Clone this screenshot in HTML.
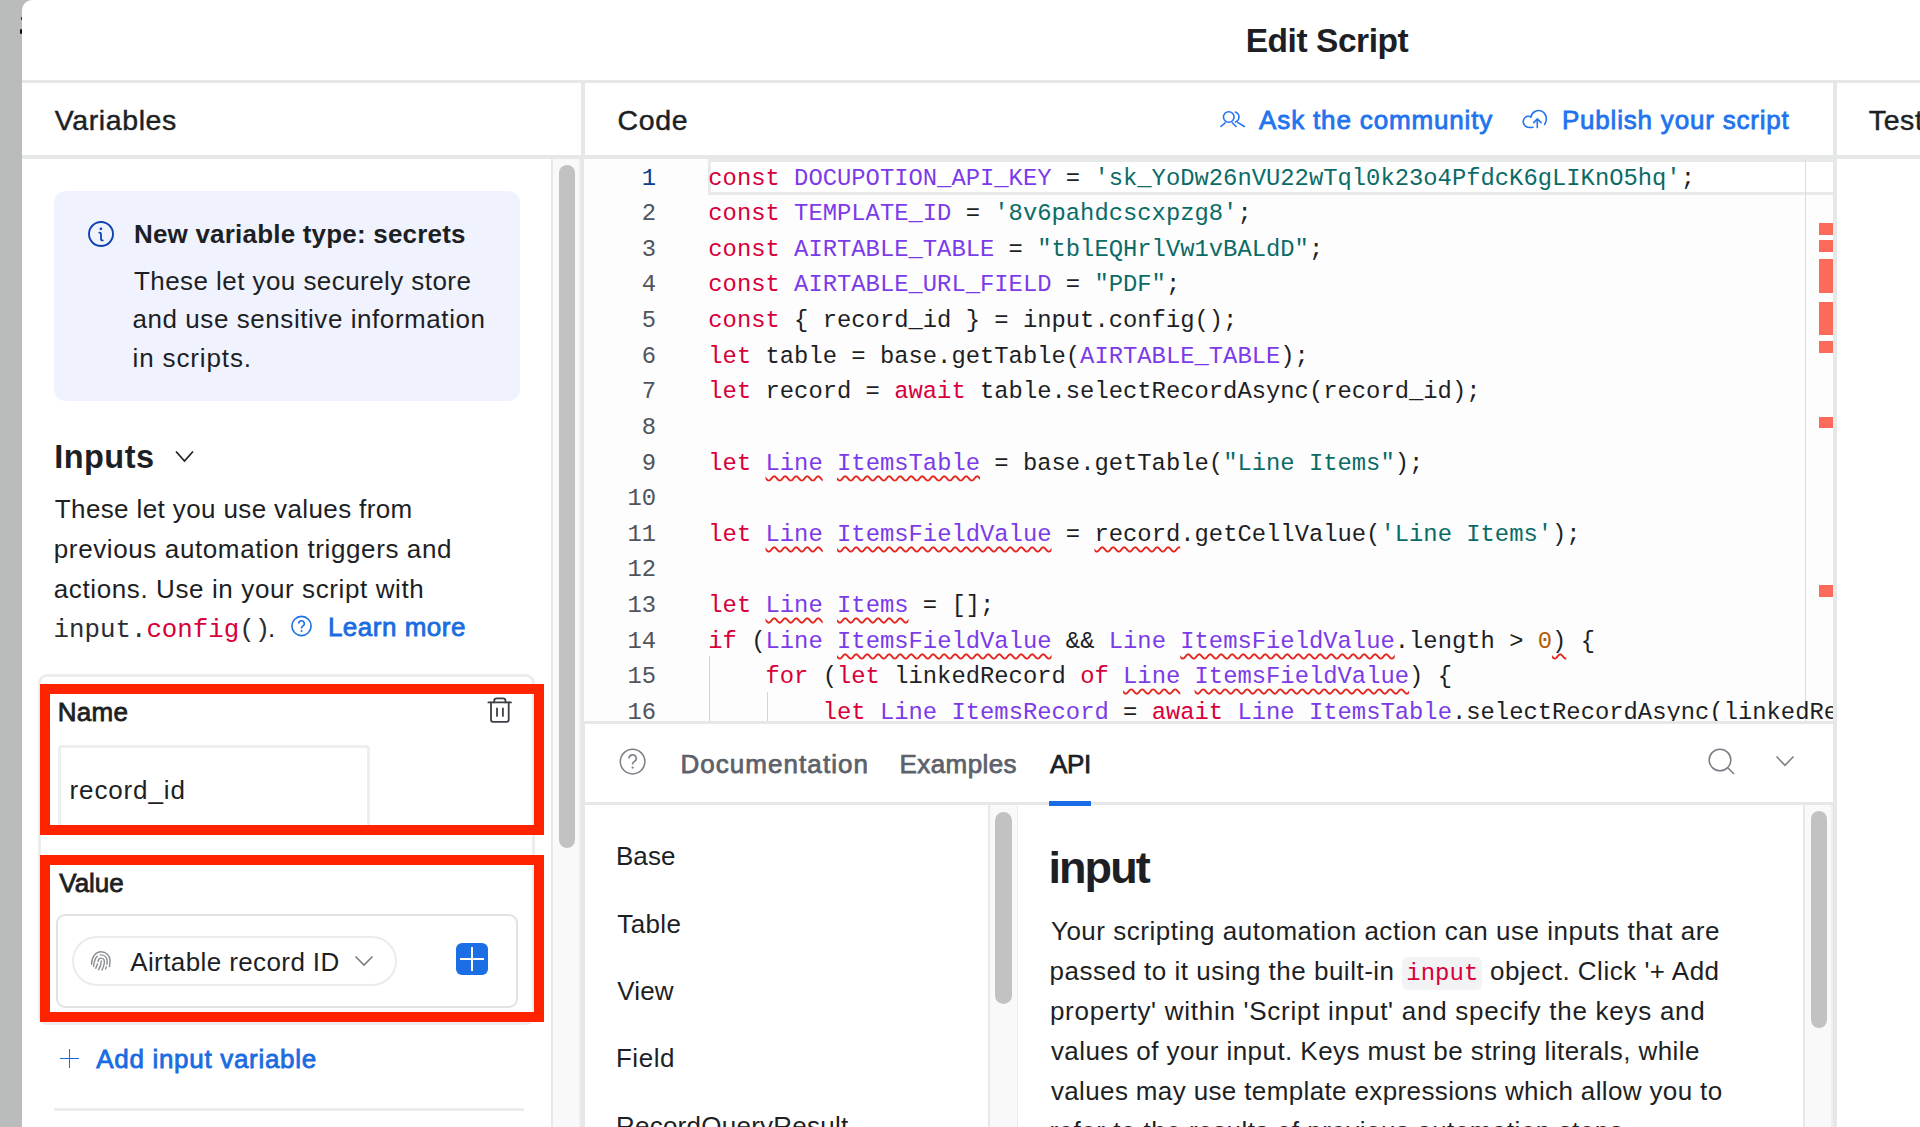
<!DOCTYPE html>
<html><head><meta charset="utf-8">
<style>
*{box-sizing:border-box;margin:0;padding:0}
html,body{width:1920px;height:1127px;overflow:hidden;background:#babbbb;font-family:"Liberation Sans",sans-serif;color:#1d1f25}
.a{position:absolute;white-space:nowrap}
.sq{text-decoration:underline wavy #e5261f;text-decoration-thickness:1.6px;text-underline-offset:5px;text-decoration-skip-ink:none}
</style></head><body>
<div class="a" style="left:21.6px;top:0px;width:1899px;height:1127px;background:#fff;border-top-left-radius:10px"></div>
<div class="a" style="left:19.5px;top:28.5px;width:2.2px;height:5.5px;background:#111;border-radius:1px"></div>
<div class="a" style="left:20.6px;top:17px;width:1.1px;height:3px;background:#333"></div>
<div class="a" style="left:1245.70px;top:24.34px;font-size:33.5px;line-height:33.5px;font-weight:bold;color:#1d1f25;letter-spacing:-0.446px;font-family:'Liberation Sans',sans-serif;">Edit Script</div>
<div class="a" style="left:22px;top:79.6px;width:1898px;height:3.4px;background:#e6e7e7"></div>
<div class="a" style="left:22px;top:155px;width:1898px;height:3.7px;background:#e6e7e7"></div>
<div class="a" style="left:581.2px;top:83px;width:3.7px;height:1044px;background:#e6e7e7"></div>
<div class="a" style="left:1833px;top:83px;width:3.5px;height:1044px;background:#e6e7e7"></div>
<div class="a" style="left:54.83px;top:106.37px;font-size:28.5px;line-height:28.5px;font-weight:normal;color:#1d1f25;letter-spacing:0.594px;font-family:'Liberation Sans',sans-serif;-webkit-text-stroke:0.45px #1d1f25;">Variables</div>
<div class="a" style="left:617.52px;top:106.37px;font-size:28.5px;line-height:28.5px;font-weight:normal;color:#1d1f25;letter-spacing:0.689px;font-family:'Liberation Sans',sans-serif;-webkit-text-stroke:0.45px #1d1f25;">Code</div>
<div class="a" style="left:1868.8px;top:106.17px;font-size:28.5px;line-height:28.5px;font-weight:normal;color:#1d1f25;letter-spacing:0.6px;font-family:'Liberation Sans',sans-serif;-webkit-text-stroke:0.45px #1d1f25;">Test</div>
<div class="a" style="left:551.4px;top:158.8px;width:29.8px;height:969px;background:#f9f9f9;border-left:2px solid #e8e8e8;border-right:2px solid #eeeeee"></div>
<div class="a" style="left:559px;top:165px;width:16px;height:683px;background:#c2c2c2;border-radius:8px"></div>
<div class="a" style="left:54px;top:191px;width:466px;height:210px;background:#f0f3fd;border-radius:12px"></div>
<svg class="a" style="left:87px;top:220px" width="28" height="28" viewBox="0 0 28 28"><circle cx="14" cy="14" r="12" fill="none" stroke="#0f44b0" stroke-width="1.9"/><circle cx="13.9" cy="8.8" r="1.35" fill="#0f44b0"/><path d="M12.4 12.7Q14 12.7 14 14.2V19Q14 20.4 15.7 20.4" fill="none" stroke="#0f44b0" stroke-width="1.8" stroke-linecap="round"/></svg>
<div class="a" style="left:134.00px;top:221.09px;font-size:26px;line-height:26px;font-weight:bold;color:#1d1f25;letter-spacing:0.194px;font-family:'Liberation Sans',sans-serif;">New variable type: secrets</div>
<div class="a" style="left:134.00px;top:267.59px;font-size:26px;line-height:26px;font-weight:normal;color:#1d1f25;letter-spacing:0.434px;font-family:'Liberation Sans',sans-serif;">These let you securely store</div>
<div class="a" style="left:132.50px;top:306.39px;font-size:26px;line-height:26px;font-weight:normal;color:#1d1f25;letter-spacing:0.561px;font-family:'Liberation Sans',sans-serif;">and use sensitive information</div>
<div class="a" style="left:132.50px;top:345.19px;font-size:26px;line-height:26px;font-weight:normal;color:#1d1f25;letter-spacing:0.867px;font-family:'Liberation Sans',sans-serif;">in scripts.</div>
<div class="a" style="left:54.25px;top:441.39px;font-size:32.5px;line-height:32.5px;font-weight:bold;color:#1d1f25;letter-spacing:0.448px;font-family:'Liberation Sans',sans-serif;">Inputs</div>
<svg class="a" style="left:174px;top:449px" width="21" height="15" viewBox="0 0 21 15"><path d="M2 2.5L10.5 12L19 2.5" fill="none" stroke="#1d1f25" stroke-width="1.7"/></svg>
<div class="a" style="left:54.80px;top:495.99px;font-size:26px;line-height:26px;font-weight:normal;color:#1d1f25;letter-spacing:0.379px;font-family:'Liberation Sans',sans-serif;">These let you use values from</div>
<div class="a" style="left:53.80px;top:535.79px;font-size:26px;line-height:26px;font-weight:normal;color:#1d1f25;letter-spacing:0.613px;font-family:'Liberation Sans',sans-serif;">previous automation triggers and</div>
<div class="a" style="left:53.80px;top:575.59px;font-size:26px;line-height:26px;font-weight:normal;color:#1d1f25;letter-spacing:0.608px;font-family:'Liberation Sans',sans-serif;">actions. Use in your script with</div>
<div class="a" style="left:53.5px;top:617.52px;font-size:25.8px;line-height:25.8px;font-weight:normal;color:#2a2d33;letter-spacing:0px;font-family:'Liberation Mono',monospace;">input.<span style="color:#d7003a">config</span>()</div>
<div class="a" style="left:268px;top:615.29px;font-size:26px;line-height:26px;font-weight:normal;color:#1d1f25;letter-spacing:0px;font-family:'Liberation Sans',sans-serif;">.</div>
<svg class="a" style="left:290px;top:614px" width="24" height="24" viewBox="0 0 24 24"><circle cx="11.5" cy="12" r="9.6" fill="none" stroke="#1f6fe5" stroke-width="1.6"/><path d="M8.7 9.6a2.8 2.8 0 1 1 4.2 2.4c-.9.5-1.4 1-1.4 2v.6" fill="none" stroke="#1f6fe5" stroke-width="1.6"/><circle cx="11.5" cy="16.9" r="1" fill="#1f6fe5"/></svg>
<div class="a" style="left:327.90px;top:613.99px;font-size:26px;line-height:26px;font-weight:normal;color:#1a6ce0;letter-spacing:0.511px;font-family:'Liberation Sans',sans-serif;-webkit-text-stroke:0.8px #1a6ce0;">Learn more</div>
<div class="a" style="left:38px;top:674px;width:497px;height:351px;border:3px solid #ededed;border-radius:9px"></div>
<div class="a" style="left:58px;top:745px;width:312px;height:90px;border:3px solid #eeeeee;border-radius:4px;border-bottom:none"></div>
<div class="a" style="left:57.70px;top:699.49px;font-size:26px;line-height:26px;font-weight:normal;color:#1d1f25;letter-spacing:0.268px;font-family:'Liberation Sans',sans-serif;-webkit-text-stroke:0.8px #1d1f25;">Name</div>
<svg class="a" style="left:486px;top:696px" width="28" height="28" viewBox="0 0 28 28" fill="none" stroke="#3c3f46" stroke-width="1.8" stroke-linecap="round"><path d="M2.4 6.4H25"/><path d="M8.2 6.4V4.8a2.5 2.5 0 0 1 2.5-2.5h6.3a2.5 2.5 0 0 1 2.5 2.5V6.4"/><path d="M5 6.4V23.8a2 2 0 0 0 2 2h13.7a2 2 0 0 0 2-2V6.4"/><path d="M11 12.4V19.9M16.9 12.4V19.9"/></svg>
<div class="a" style="left:69.60px;top:776.69px;font-size:26px;line-height:26px;font-weight:normal;color:#1d1f25;letter-spacing:0.858px;font-family:'Liberation Sans',sans-serif;">record_id</div>
<div class="a" style="left:59.30px;top:869.89px;font-size:26px;line-height:26px;font-weight:normal;color:#1d1f25;letter-spacing:-0.027px;font-family:'Liberation Sans',sans-serif;-webkit-text-stroke:0.8px #1d1f25;">Value</div>
<div class="a" style="left:56px;top:914px;width:462px;height:94px;border:2px solid #e2e2e2;border-radius:9px"></div>
<div class="a" style="left:72px;top:936px;width:325px;height:50px;border:2px solid #ebebeb;border-radius:25px"></div>
<svg class="a" style="left:85px;top:945px" width="32" height="32" viewBox="0 0 32 32" fill="none" stroke="#8b8e93" stroke-width="1.4" stroke-linecap="round"><path d="M6.5 19.3C6.6 11.5 11 6.8 15.9 6.8C21 6.8 25 10.5 25 15.3C25 18 24.7 20 24.4 21.6"/><path d="M12.2 11.4C9.5 13.5 9.3 17 8.5 21.3"/><path d="M15.3 9.9C19 10 22 12 22.1 15.3C22.2 17 22 18 21.9 19.3"/><path d="M13.1 16.5C13.2 14.3 14.5 13.1 16 13.1C18.5 13.1 19.6 15 19.4 17.5C19.2 20.5 18 23 17 25"/><path d="M16.2 15.9C16.3 19.5 15 22.5 13.6 24.7"/><path d="M12.5 18.8L10.8 23.3"/><path d="M21.3 21.9L20.5 23.9"/></svg>
<div class="a" style="left:130.20px;top:949.49px;font-size:26px;line-height:26px;font-weight:normal;color:#1d1f25;letter-spacing:0.399px;font-family:'Liberation Sans',sans-serif;">Airtable record ID</div>
<svg class="a" style="left:353px;top:954px" width="22" height="14" viewBox="0 0 22 14"><path d="M2.5 2.5L11 11L19.5 2.5" fill="none" stroke="#7a7d83" stroke-width="1.6"/></svg>
<div class="a" style="left:456px;top:943px;width:32px;height:32px;background:#1b6ee3;border-radius:6px"></div>
<div class="a" style="left:460px;top:958px;width:24px;height:2px;background:#fff"></div>
<div class="a" style="left:471px;top:947px;width:2px;height:24px;background:#fff"></div>
<div class="a" style="left:40px;top:684px;width:504px;height:151px;border:10px solid #ff2300"></div>
<div class="a" style="left:40px;top:855px;width:504px;height:167px;border:10px solid #ff2300"></div>
<div class="a" style="left:60px;top:1057.5px;width:19px;height:1.6px;background:#1a6ce0"></div>
<div class="a" style="left:68.7px;top:1049px;width:1.6px;height:19px;background:#1a6ce0"></div>
<div class="a" style="left:96.20px;top:1045.99px;font-size:26px;line-height:26px;font-weight:normal;color:#1a6ce0;letter-spacing:0.695px;font-family:'Liberation Sans',sans-serif;-webkit-text-stroke:0.8px #1a6ce0;">Add input variable</div>
<div class="a" style="left:54px;top:1108px;width:470px;height:3px;background:#ededed"></div>
<svg class="a" style="left:1218px;top:106px" width="30" height="24" viewBox="0 0 30 24" fill="none" stroke="#2574f0" stroke-width="1.6" stroke-linecap="round"><circle cx="10.75" cy="11" r="5.3"/><path d="M17.4 6A5.3 5.3 0 0 1 17.4 16"/><path d="M2.9 20.5L7.2 16.8M14.3 16.8L18 20.5M19.6 16.4L26.4 20.5"/></svg>
<div class="a" style="left:1259.10px;top:107.09px;font-size:26px;line-height:26px;font-weight:normal;color:#2273ee;letter-spacing:0.848px;font-family:'Liberation Sans',sans-serif;-webkit-text-stroke:0.8px #2273ee;">Ask the community</div>
<svg class="a" style="left:1520px;top:107px" width="30" height="24" viewBox="0 0 30 24" fill="none" stroke="#2574f0" stroke-width="1.6" stroke-linecap="round"><path d="M12.9 20.3C6 21.5 2.2 17.5 3.5 13C4.6 9.5 8 8.5 10.8 9.8"/><path d="M10.8 10.2C12 4.5 18 2 22.5 4.6C27 7.2 27.5 13.5 24.6 17.4"/><path d="M17.3 20.6V11.9M13.7 15.6L17.3 11.9L21.1 15.6"/></svg>
<div class="a" style="left:1561.90px;top:107.09px;font-size:26px;line-height:26px;font-weight:normal;color:#2273ee;letter-spacing:0.806px;font-family:'Liberation Sans',sans-serif;-webkit-text-stroke:0.8px #2273ee;">Publish your script</div>
<div class="a" style="left:584px;top:158.7px;width:1249px;height:562.3px;background:#fdfdfd;overflow:hidden"></div>
<div class="a" style="left:708px;top:159px;width:1125px;height:36px;border:3.8px solid #e8e9e9;border-right:none;background:#fff"></div>
<div class="a" style="left:1805px;top:158.7px;width:1px;height:562.3px;background:#dcdcdc"></div>
<div class="a" style="left:1819px;top:223px;width:14px;height:12px;background:#fb6a5b"></div>
<div class="a" style="left:1819px;top:240px;width:14px;height:12px;background:#fb6a5b"></div>
<div class="a" style="left:1819px;top:259px;width:14px;height:34px;background:#fb6a5b"></div>
<div class="a" style="left:1819px;top:302px;width:14px;height:33px;background:#fb6a5b"></div>
<div class="a" style="left:1819px;top:341px;width:14px;height:12px;background:#fb6a5b"></div>
<div class="a" style="left:1819px;top:417px;width:14px;height:11px;background:#fb6a5b"></div>
<div class="a" style="left:1819px;top:585px;width:14px;height:12px;background:#fb6a5b"></div>
<div class="a" style="left:584px;top:158.7px;width:1249px;height:562.3px;overflow:hidden"><div class="a" style="left:0;width:72px;text-align:right;top:7.83px;font:23.83px/23.83px 'Liberation Mono',monospace;color:#0d3b8e">1</div><div class="a" style="left:124.3px;top:7.83px;font:23.83px/23.83px 'Liberation Mono',monospace;color:#1d1f25;white-space:pre"><span style="color:#d7003a">const</span> <span class="" style="color:#7c3be8">DOCUPOTION_API_KEY</span> = <span style="color:#0b6b66">&#x27;sk_YoDw26nVU22wTql0k23o4PfdcK6gLIKnO5hq&#x27;</span>;</div><div class="a" style="left:0;width:72px;text-align:right;top:43.46px;font:23.83px/23.83px 'Liberation Mono',monospace;color:#50545c">2</div><div class="a" style="left:124.3px;top:43.46px;font:23.83px/23.83px 'Liberation Mono',monospace;color:#1d1f25;white-space:pre"><span style="color:#d7003a">const</span> <span class="" style="color:#7c3be8">TEMPLATE_ID</span> = <span style="color:#0b6b66">&#x27;8v6pahdcscxpzg8&#x27;</span>;</div><div class="a" style="left:0;width:72px;text-align:right;top:79.09px;font:23.83px/23.83px 'Liberation Mono',monospace;color:#50545c">3</div><div class="a" style="left:124.3px;top:79.09px;font:23.83px/23.83px 'Liberation Mono',monospace;color:#1d1f25;white-space:pre"><span style="color:#d7003a">const</span> <span class="" style="color:#7c3be8">AIRTABLE_TABLE</span> = <span style="color:#0b6b66">&quot;tblEQHrlVw1vBALdD&quot;</span>;</div><div class="a" style="left:0;width:72px;text-align:right;top:114.72px;font:23.83px/23.83px 'Liberation Mono',monospace;color:#50545c">4</div><div class="a" style="left:124.3px;top:114.72px;font:23.83px/23.83px 'Liberation Mono',monospace;color:#1d1f25;white-space:pre"><span style="color:#d7003a">const</span> <span class="" style="color:#7c3be8">AIRTABLE_URL_FIELD</span> = <span style="color:#0b6b66">&quot;PDF&quot;</span>;</div><div class="a" style="left:0;width:72px;text-align:right;top:150.35px;font:23.83px/23.83px 'Liberation Mono',monospace;color:#50545c">5</div><div class="a" style="left:124.3px;top:150.35px;font:23.83px/23.83px 'Liberation Mono',monospace;color:#1d1f25;white-space:pre"><span style="color:#d7003a">const</span> { record_id } = input.config();</div><div class="a" style="left:0;width:72px;text-align:right;top:185.98px;font:23.83px/23.83px 'Liberation Mono',monospace;color:#50545c">6</div><div class="a" style="left:124.3px;top:185.98px;font:23.83px/23.83px 'Liberation Mono',monospace;color:#1d1f25;white-space:pre"><span style="color:#d7003a">let</span> table = base.getTable(<span class="" style="color:#7c3be8">AIRTABLE_TABLE</span>);</div><div class="a" style="left:0;width:72px;text-align:right;top:221.61px;font:23.83px/23.83px 'Liberation Mono',monospace;color:#50545c">7</div><div class="a" style="left:124.3px;top:221.61px;font:23.83px/23.83px 'Liberation Mono',monospace;color:#1d1f25;white-space:pre"><span style="color:#d7003a">let</span> record = <span style="color:#d7003a">await</span> table.selectRecordAsync(record_id);</div><div class="a" style="left:0;width:72px;text-align:right;top:257.24px;font:23.83px/23.83px 'Liberation Mono',monospace;color:#50545c">8</div><div class="a" style="left:124.3px;top:257.24px;font:23.83px/23.83px 'Liberation Mono',monospace;color:#1d1f25;white-space:pre"></div><div class="a" style="left:0;width:72px;text-align:right;top:292.87px;font:23.83px/23.83px 'Liberation Mono',monospace;color:#50545c">9</div><div class="a" style="left:124.3px;top:292.87px;font:23.83px/23.83px 'Liberation Mono',monospace;color:#1d1f25;white-space:pre"><span style="color:#d7003a">let</span> <span class="sq" style="color:#7c3be8">Line</span> <span class="sq" style="color:#7c3be8">ItemsTable</span> = base.getTable(<span style="color:#0b6b66">&quot;Line Items&quot;</span>);</div><div class="a" style="left:0;width:72px;text-align:right;top:328.50px;font:23.83px/23.83px 'Liberation Mono',monospace;color:#50545c">10</div><div class="a" style="left:124.3px;top:328.50px;font:23.83px/23.83px 'Liberation Mono',monospace;color:#1d1f25;white-space:pre"></div><div class="a" style="left:0;width:72px;text-align:right;top:364.13px;font:23.83px/23.83px 'Liberation Mono',monospace;color:#50545c">11</div><div class="a" style="left:124.3px;top:364.13px;font:23.83px/23.83px 'Liberation Mono',monospace;color:#1d1f25;white-space:pre"><span style="color:#d7003a">let</span> <span class="sq" style="color:#7c3be8">Line</span> <span class="sq" style="color:#7c3be8">ItemsFieldValue</span> = <span class="sq">record</span>.getCellValue(<span style="color:#0b6b66">&#x27;Line Items&#x27;</span>);</div><div class="a" style="left:0;width:72px;text-align:right;top:399.76px;font:23.83px/23.83px 'Liberation Mono',monospace;color:#50545c">12</div><div class="a" style="left:124.3px;top:399.76px;font:23.83px/23.83px 'Liberation Mono',monospace;color:#1d1f25;white-space:pre"></div><div class="a" style="left:0;width:72px;text-align:right;top:435.39px;font:23.83px/23.83px 'Liberation Mono',monospace;color:#50545c">13</div><div class="a" style="left:124.3px;top:435.39px;font:23.83px/23.83px 'Liberation Mono',monospace;color:#1d1f25;white-space:pre"><span style="color:#d7003a">let</span> <span class="sq" style="color:#7c3be8">Line</span> <span class="sq" style="color:#7c3be8">Items</span> = [];</div><div class="a" style="left:0;width:72px;text-align:right;top:471.02px;font:23.83px/23.83px 'Liberation Mono',monospace;color:#50545c">14</div><div class="a" style="left:124.3px;top:471.02px;font:23.83px/23.83px 'Liberation Mono',monospace;color:#1d1f25;white-space:pre"><span style="color:#d7003a">if</span> (<span class="" style="color:#7c3be8">Line</span> <span class="sq" style="color:#7c3be8">ItemsFieldValue</span> &amp;&amp; <span class="" style="color:#7c3be8">Line</span> <span class="sq" style="color:#7c3be8">ItemsFieldValue</span>.length &gt; <span style="color:#b65c00">0</span><span class="sq">)</span> {</div><div class="a" style="left:0;width:72px;text-align:right;top:506.65px;font:23.83px/23.83px 'Liberation Mono',monospace;color:#50545c">15</div><div class="a" style="left:124.3px;top:506.65px;font:23.83px/23.83px 'Liberation Mono',monospace;color:#1d1f25;white-space:pre">    <span style="color:#d7003a">for</span> (<span style="color:#d7003a">let</span> linkedRecord <span style="color:#d7003a">of</span> <span class="sq" style="color:#7c3be8">Line</span> <span class="sq" style="color:#7c3be8">ItemsFieldValue</span>) {</div><div class="a" style="left:0;width:72px;text-align:right;top:542.28px;font:23.83px/23.83px 'Liberation Mono',monospace;color:#50545c">16</div><div class="a" style="left:124.3px;top:542.28px;font:23.83px/23.83px 'Liberation Mono',monospace;color:#1d1f25;white-space:pre">        <span style="color:#d7003a">let</span> <span class="" style="color:#7c3be8">Line</span> <span class="" style="color:#7c3be8">ItemsRecord</span> = <span style="color:#d7003a">await</span> <span class="" style="color:#7c3be8">Line</span> <span class="" style="color:#7c3be8">ItemsTable</span>.selectRecordAsync(linkedRecord);</div><div class="a" style="left:124.5px;top:497.3px;width:1px;height:80px;background:#d4d4d4"></div><div class="a" style="left:182.5px;top:532.9px;width:1px;height:60px;background:#d4d4d4"></div></div>
<div class="a" style="left:584px;top:721px;width:1249px;height:3.3px;background:#e6e7e7"></div>
<svg class="a" style="left:618px;top:747px" width="29" height="29" viewBox="0 0 29 29"><circle cx="14.6" cy="14.6" r="12.3" fill="none" stroke="#7c7f85" stroke-width="1.5"/><path d="M11 11.4a3.6 3.6 0 1 1 5.4 3.1c-1.1.6-1.8 1.2-1.8 2.4v.6" fill="none" stroke="#7c7f85" stroke-width="1.6"/><circle cx="14.6" cy="20.6" r="1.1" fill="#7c7f85"/></svg>
<div class="a" style="left:680.38px;top:750.79px;font-size:26px;line-height:26px;font-weight:normal;color:#5d616b;letter-spacing:1.061px;font-family:'Liberation Sans',sans-serif;-webkit-text-stroke:0.75px #5d616b;">Documentation</div>
<div class="a" style="left:899.62px;top:751.09px;font-size:26px;line-height:26px;font-weight:normal;color:#5d616b;letter-spacing:0.392px;font-family:'Liberation Sans',sans-serif;-webkit-text-stroke:0.75px #5d616b;">Examples</div>
<div class="a" style="left:1050.12px;top:751.09px;font-size:26px;line-height:26px;font-weight:normal;color:#1d1f25;letter-spacing:-0.392px;font-family:'Liberation Sans',sans-serif;-webkit-text-stroke:0.75px #1d1f25;">API</div>
<svg class="a" style="left:1706px;top:746px" width="32" height="32" viewBox="0 0 32 32" fill="none" stroke="#7c7f85" stroke-width="1.6"><circle cx="14" cy="14" r="10.8"/><path d="M21.8 21.8L28 28"/></svg>
<svg class="a" style="left:1774px;top:754px" width="22" height="15" viewBox="0 0 22 15"><path d="M2.5 2.5L11 11.3L19.5 2.5" fill="none" stroke="#7c7f85" stroke-width="1.6"/></svg>
<div class="a" style="left:584px;top:801.5px;width:1249px;height:3.7px;background:#e6e7e7"></div>
<div class="a" style="left:1049px;top:801.3px;width:42px;height:4.3px;background:#1a6ce6"></div>
<div class="a" style="left:615.90px;top:843.29px;font-size:26px;line-height:26px;font-weight:normal;color:#1d1f25;letter-spacing:0.133px;font-family:'Liberation Sans',sans-serif;">Base</div>
<div class="a" style="left:617.30px;top:910.69px;font-size:26px;line-height:26px;font-weight:normal;color:#1d1f25;letter-spacing:0.351px;font-family:'Liberation Sans',sans-serif;">Table</div>
<div class="a" style="left:617.30px;top:978.09px;font-size:26px;line-height:26px;font-weight:normal;color:#1d1f25;letter-spacing:0.131px;font-family:'Liberation Sans',sans-serif;">View</div>
<div class="a" style="left:615.90px;top:1045.49px;font-size:26px;line-height:26px;font-weight:normal;color:#1d1f25;letter-spacing:0.551px;font-family:'Liberation Sans',sans-serif;">Field</div>
<div class="a" style="left:615.90px;top:1112.89px;font-size:26px;line-height:26px;font-weight:normal;color:#1d1f25;letter-spacing:0.257px;font-family:'Liberation Sans',sans-serif;">RecordQueryResult</div>
<div class="a" style="left:987.5px;top:805px;width:30px;height:322px;background:#f9f9f9;border-left:2px solid #e8e8e8;border-right:1px solid #ececec"></div>
<div class="a" style="left:995px;top:812px;width:17px;height:192px;background:#c2c2c2;border-radius:8.5px"></div>
<div class="a" style="left:1048.40px;top:844.71px;font-size:45px;line-height:45px;font-weight:bold;color:#1d1f25;letter-spacing:-1.891px;font-family:'Liberation Sans',sans-serif;">input</div>
<div class="a" style="left:1050.90px;top:918.39px;font-size:26px;line-height:26px;font-weight:normal;color:#1d1f25;letter-spacing:0.532px;font-family:'Liberation Sans',sans-serif;">Your scripting automation action can use inputs that are</div>
<div class="a" style="left:1049.5px;top:958.39px;font-size:26px;line-height:26px;font-weight:normal;color:#1d1f25;letter-spacing:0.5px;font-family:'Liberation Sans',sans-serif;">passed to it using the built-in <span style="font-family:'Liberation Mono',monospace;font-size:24px;letter-spacing:0;color:#d7003a;background:#f3f3f5;border-radius:6px;padding:3px 4px">input</span> object. Click '+ Add</div>
<div class="a" style="left:1049.90px;top:998.39px;font-size:26px;line-height:26px;font-weight:normal;color:#1d1f25;letter-spacing:0.731px;font-family:'Liberation Sans',sans-serif;">property' within 'Script input' and specify the keys and</div>
<div class="a" style="left:1050.90px;top:1038.39px;font-size:26px;line-height:26px;font-weight:normal;color:#1d1f25;letter-spacing:0.434px;font-family:'Liberation Sans',sans-serif;">values of your input. Keys must be string literals, while</div>
<div class="a" style="left:1050.90px;top:1078.39px;font-size:26px;line-height:26px;font-weight:normal;color:#1d1f25;letter-spacing:0.368px;font-family:'Liberation Sans',sans-serif;">values may use template expressions which allow you to</div>
<div class="a" style="left:1049.5px;top:1118.39px;font-size:26px;line-height:26px;font-weight:normal;color:#1d1f25;letter-spacing:0.5px;font-family:'Liberation Sans',sans-serif;">refer to the results of previous automation steps.</div>
<div class="a" style="left:1803px;top:805px;width:30px;height:322px;background:#f9f9f9;border-left:2px solid #e8e8e8;border-right:2px solid #efefef"></div>
<div class="a" style="left:1811px;top:811px;width:16px;height:217px;background:#c2c2c2;border-radius:8px"></div>
</body></html>
